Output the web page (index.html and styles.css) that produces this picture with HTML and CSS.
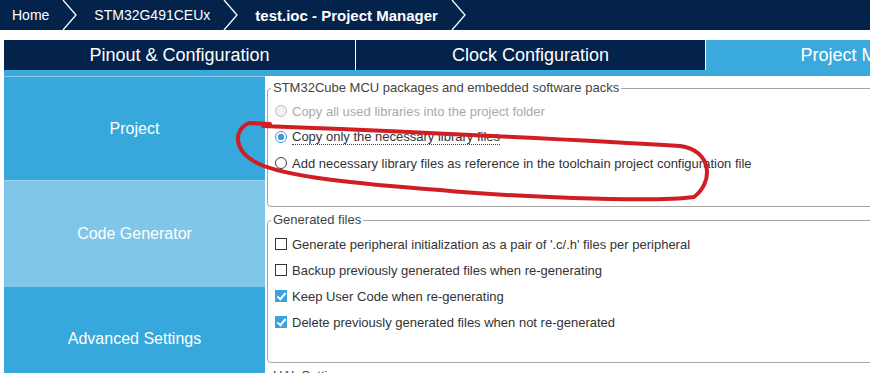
FILE: index.html
```html
<!DOCTYPE html>
<html lang="en">
<head>
    <meta charset="UTF-8">
    <meta name="viewport" content="width=device-width, initial-scale=1.0">
    <title>test.ioc - Project Manager</title>
    <link rel="stylesheet" href="styles.css">
</head>
<body>
    <div class="app">
        <header class="crumbs">
            <span class="crumb">Home</span>
            <svg class="chev" viewBox="0 0 15 30"><polyline points="1,0 14,15 1,30"/></svg>
            <span class="crumb">STM32G491CEUx</span>
            <svg class="chev" viewBox="0 0 15 30"><polyline points="1,0 14,15 1,30"/></svg>
            <span class="crumb current">test.ioc - Project Manager</span>
            <svg class="chev" viewBox="0 0 15 30"><polyline points="1,0 14,15 1,30"/></svg>
        </header>

        <nav class="tabs">
            <div class="tab">Pinout &amp; Configuration</div>
            <div class="tab">Clock Configuration</div>
            <div class="tab active">Project Manager</div>
        </nav>

        <div class="workspace">
            <aside class="side">
                <div class="side-item">Project</div>
                <div class="side-item light">Code Generator</div>
                <div class="side-item last">Advanced Settings</div>
            </aside>

            <main class="panel">
                <fieldset class="group packs">
                    <legend>STM32Cube MCU packages and embedded software packs</legend>
                    <label class="opt disabled"><span class="radio"></span>Copy all used libraries into the project folder</label>
                    <label class="opt"><span class="radio checked"></span><span class="focus">Copy only the necessary library files</span></label>
                    <label class="opt"><span class="radio"></span>Add necessary library files as reference in the toolchain project configuration file</label>
                </fieldset>

                <fieldset class="group generated">
                    <legend>Generated files</legend>
                    <label class="opt"><span class="check"></span>Generate peripheral initialization as a pair of '.c/.h' files per peripheral</label>
                    <label class="opt"><span class="check"></span>Backup previously generated files when re-generating</label>
                    <label class="opt"><span class="check checked"></span>Keep User Code when re-generating</label>
                    <label class="opt"><span class="check checked"></span>Delete previously generated files when not re-generated</label>
                </fieldset>

                <fieldset class="group hal">
                    <legend>HAL Settings</legend>
                </fieldset>
            </main>
        </div>

        <!-- red hand-drawn mark over the screenshot -->
        <svg class="markup" viewBox="0 0 870 373">
            <path d="M263,126 C400,131 600,141 680,146 C712,150 714,182 694,197 C650,203 500,196 440,190 C360,184 285,177 257,163 C232,150 234,129 249,123 L270,124"/>
        </svg>
    </div>
</body>
</html>
```

FILE: styles.css
```css
body {
    margin: 0;
    padding: 0;
    overflow: hidden;
    font-family: "Liberation Sans", Arial, sans-serif;
    background-color: #fff;
}

.app {
    position: relative;
    width: 1420px;
}

/* breadcrumb bar */
.crumbs {
    display: flex;
    align-items: center;
    height: 30px;
    padding-left: 12px;
    background-color: #03234b;
    color: #fff;
    font-size: 14px;
}

.crumb.current {
    font-size: 15px;
    font-weight: bold;
}

.chev {
    width: 15px;
    height: 30px;
    margin: 0 17px 0 13px;
}

.chev polyline {
    fill: none;
    stroke: #fff;
    stroke-width: 1.3;
}

/* main tabs */
.tabs {
    display: grid;
    grid-template-columns: 351px 349px 351px;
    gap: 1px;
    margin: 10px 0 0 4px;
    background-color: #fff;
}

.tab {
    height: 30px;
    line-height: 30px;
    text-align: center;
    font-size: 18px;
    color: #fff;
    background-color: #03234b;
}

.tab.active {
    padding-right: 30px;
    background-color: #3aa9dc;
}

/* sidebar + panel */
.workspace {
    display: flex;
    margin-left: 4px;
    padding-top: 6px;
    background-color: #3aa9dc;
}

.side {
    width: 261px;
    flex-shrink: 0;
    border-top: 1px solid #8fcdec;
}

.side-item {
    display: flex;
    align-items: center;
    justify-content: center;
    height: 103px;
    font-size: 16px;
    color: #fff;
    background-color: #36a8dc;
    border-bottom: 1px solid #9ed4ef;
}

.side-item.light {
    height: 106px;
    background-color: #7fc6e8;
    border-bottom: none;
}

.side-item.last {
    height: 104px;
    border-bottom: none;
}

.panel {
    flex: 1;
    padding: 4px 0 0 2px;
    background-color: #fff;
}

.group {
    margin: 0 0 5px 0;
    padding: 2px 0 30px 7px;
    border: 1px solid #a5a5a5;
    border-radius: 4px;
    min-width: 0;
}

.group legend {
    margin-left: -4px;
    padding: 0 2px;
    font-size: 13px;
    line-height: 16px;
    color: #444;
}

.group.generated {
    padding: 3px 0 27px 7px;
}

.opt {
    display: flex;
    align-items: center;
    height: 26px;
    font-size: 13px;
    color: #333;
}

.opt.disabled {
    color: #a9a9a9;
}

.focus {
    line-height: 15px;
    border-bottom: 1px dotted #444;
}

/* radio buttons */
.radio {
    box-sizing: border-box;
    width: 12px;
    height: 12px;
    margin-right: 5px;
    border: 1px solid #3c3c3c;
    border-radius: 50%;
    background-color: #fff;
    flex-shrink: 0;
}

.disabled .radio {
    border-color: #bdbdbd;
    background-color: #f2f2f2;
}

.radio.checked {
    border-color: #3a9ad9;
    background: radial-gradient(circle, #3a9ad9 0 3px, #fff 3.5px);
}

/* check boxes */
.check {
    position: relative;
    box-sizing: border-box;
    width: 12px;
    height: 12px;
    margin-right: 5px;
    border: 1px solid #333;
    background-color: #fff;
    flex-shrink: 0;
}

.check.checked {
    border-color: #3aa2dc;
    background-color: #3aa2dc;
}

.check.checked::after {
    content: "";
    position: absolute;
    left: 3px;
    top: 0px;
    width: 3px;
    height: 7px;
    border: solid #fff;
    border-width: 0 2px 2px 0;
    transform: rotate(40deg);
}

/* annotation overlay */
.markup {
    position: absolute;
    top: 0;
    left: 0;
    width: 870px;
    height: 373px;
    pointer-events: none;
}

.markup path {
    fill: none;
    stroke: #d01e24;
    stroke-width: 4;
    stroke-linecap: round;
    stroke-linejoin: round;
}
```
